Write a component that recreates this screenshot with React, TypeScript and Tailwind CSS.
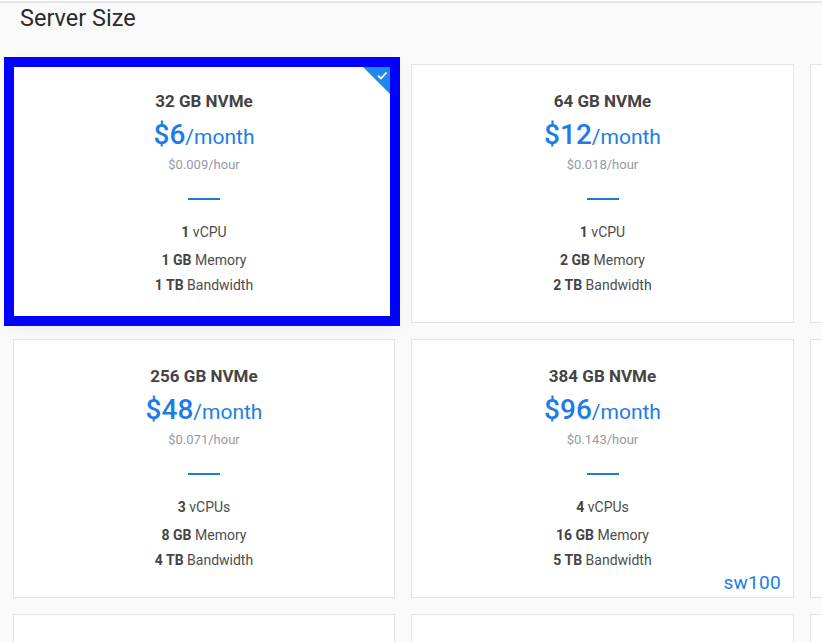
import React from 'react';

type Plan = {
  disk: string;
  price: string;
  hourly: string;
  cpu: string;
  cpuLabel: string;
  mem: string;
  bw: string;
};

const PLANS: Plan[] = [
  { disk: '32 GB NVMe', price: '$6', hourly: '$0.009/hour', cpu: '1', cpuLabel: 'vCPU', mem: '1 GB', bw: '1 TB' },
  { disk: '64 GB NVMe', price: '$12', hourly: '$0.018/hour', cpu: '1', cpuLabel: 'vCPU', mem: '2 GB', bw: '2 TB' },
  { disk: '128 GB NVMe', price: '$24', hourly: '$0.036/hour', cpu: '2', cpuLabel: 'vCPUs', mem: '4 GB', bw: '3 TB' },
  { disk: '256 GB NVMe', price: '$48', hourly: '$0.071/hour', cpu: '3', cpuLabel: 'vCPUs', mem: '8 GB', bw: '4 TB' },
  { disk: '384 GB NVMe', price: '$96', hourly: '$0.143/hour', cpu: '4', cpuLabel: 'vCPUs', mem: '16 GB', bw: '5 TB' },
  { disk: '512 GB NVMe', price: '$192', hourly: '$0.286/hour', cpu: '6', cpuLabel: 'vCPUs', mem: '32 GB', bw: '6 TB' },
  { disk: '640 GB NVMe', price: '$240', hourly: '$0.357/hour', cpu: '8', cpuLabel: 'vCPUs', mem: '48 GB', bw: '7 TB' },
  { disk: '768 GB NVMe', price: '$288', hourly: '$0.429/hour', cpu: '12', cpuLabel: 'vCPUs', mem: '64 GB', bw: '8 TB' },
  { disk: '1 TB NVMe', price: '$384', hourly: '$0.571/hour', cpu: '16', cpuLabel: 'vCPUs', mem: '96 GB', bw: '9 TB' },
];

function PlanCard({ plan, selected, tag }: { plan: Plan; selected?: boolean; tag?: string }) {
  return (
    <div
      className={`relative h-[259px] bg-white border border-[#e3e4e8] flex flex-col items-center ${
        selected ? 'shadow-[0_2px_18px_rgba(0,0,0,0.08)]' : ''
      }`}
    >
      {/* selection frame + corner check */}
      {selected && (
        <>
          <div className="absolute -left-[10px] -right-[6px] -top-[8px] -bottom-[4px] border-[10px] border-[#0000ff] pointer-events-none" />
          <div className="absolute top-[2px] right-[4px] w-[27px] h-[27px]">
            <svg width="27" height="27" viewBox="0 0 27 27">
              <polygon points="0,0 27,0 27,27" fill="#1e88f0" />
              <path d="M15 8.5 L18 11.5 L23.5 5.5" stroke="#fff" strokeWidth="1.8" fill="none" />
            </svg>
          </div>
        </>
      )}

      <div className="mt-[25px] text-[17px] leading-[22px] font-bold text-[#444]">{plan.disk}</div>
      <div className="mt-[8px] h-[30px] flex items-baseline text-[#1c7de6]">
        <span className="text-[28px] leading-[30px] font-medium">{plan.price}</span>
        <span className="text-[21px] leading-[30px]">/month</span>
      </div>
      <div className="mt-[7px] text-[13px] leading-[16px] text-[#959aa3]">{plan.hourly}</div>
      <div className="mt-[25px] w-[32px] h-[2px] bg-[#1c7ad8]" />
      <div className="mt-[23px] flex flex-col items-center text-[14px] leading-[18px] text-[#4d4d4d]">
        <div>
          <b className="font-bold text-[#444]">{plan.cpu}</b> {plan.cpuLabel}
        </div>
        <div className="mt-[10px]">
          <b className="font-bold text-[#444]">{plan.mem}</b> Memory
        </div>
        <div className="mt-[7px]">
          <b className="font-bold text-[#444]">{plan.bw}</b> Bandwidth
        </div>
      </div>

      {tag && (
        <div className="absolute right-[12px] bottom-[3px] text-[19px] leading-[22px] text-[#1c7de6] tracking-[0.3px]">
          {tag}
        </div>
      )}
    </div>
  );
}

export default function App() {
  return (
    <div
      className="w-[822px] h-[642px] overflow-hidden bg-[#fafafb] border-t-2 border-t-[#e6e6e9] mt-[1px]"
      style={{ fontFamily: 'Roboto, "Liberation Sans", sans-serif' }}
    >
      <h2 className="pl-[20px] pt-[1px] text-[23.5px] leading-[28px] text-[#2a2a2e]">Server Size</h2>

      <div className="mt-[32px] pl-[13px] grid grid-cols-[382px_383px_383px] gap-x-4 gap-y-4">
        {PLANS.map((p, i) => (
          <PlanCard key={p.disk} plan={p} selected={i === 0} tag={i === 4 ? 'sw100' : undefined} />
        ))}
      </div>
    </div>
  );
}
